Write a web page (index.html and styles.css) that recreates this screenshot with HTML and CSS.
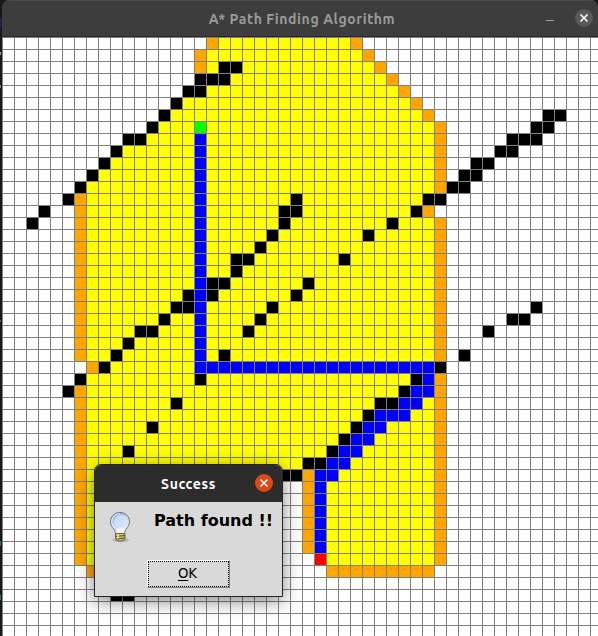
FILE: index.html
```html
<!DOCTYPE html>
<html lang="en">
<head>
<meta charset="utf-8">
<title>A* Path Finding Algorithm</title>
<link rel="stylesheet" href="styles.css">
</head>
<body>
<div class="window">
  <header class="titlebar">
    <h1 class="title">A* Path Finding Algorithm</h1>
    <div class="controls">
      <span class="minimize"></span>
      <span class="close"><svg viewBox="0 0 18 18"><path d="M5.500 5.500l7 7M12.500 5.500l-7 7"/></svg></span>
    </div>
  </header>
  <main class="board" id="board"></main>
</div>

<section class="dialog">
  <header class="dialog-title">
    <h2>Success</h2>
    <span class="dialog-close"><svg viewBox="0 0 18 18"><path d="M5.500 5.500l7 7M12.500 5.500l-7 7"/></svg></span>
  </header>
  <div class="dialog-body">
    <div class="message">
      <svg class="bulb" viewBox="0 0 32 32">
        <defs>
          <linearGradient id="glass" x1="0" y1="0" x2="0.6" y2="1">
            <stop offset="0" stop-color="#6f9fe0"/>
            <stop offset="0.5" stop-color="#bcd3f2"/>
            <stop offset="1" stop-color="#f4f4f0"/>
          </linearGradient>
          <radialGradient id="shade">
            <stop offset="0" stop-color="#000" stop-opacity="0.5"/>
            <stop offset="1" stop-color="#000" stop-opacity="0"/>
          </radialGradient>
        </defs>
        <ellipse cx="16.500" cy="29" rx="10" ry="2.600" fill="url(#shade)"/>
        <path d="M16 1.500C10.500 1.500 6.500 5.500 6.500 10.700c0 3.400 1.700 5.300 3.200 7.300 1.100 1.500 1.600 2.800 1.800 5.200h9c.2-2.400.7-3.700 1.800-5.200 1.500-2 3.200-3.900 3.200-7.300C25.500 5.500 21.500 1.500 16 1.500z" fill="url(#glass)" stroke="#6d7585" stroke-width="1"/>
        <path d="M16 2.700c-4.800 0-8.300 3.500-8.300 8 0 2.800 1.300 4.500 2.800 6.500" fill="none" stroke="#f5f9ff" stroke-width="1"/>
        <circle cx="16.500" cy="10.500" r="6.500" fill="#d5e3f7" opacity="0.75"/>
        <path d="M14 22v-4l1.500 1 1.500-1 1.500 1v3" fill="none" stroke="#fff" stroke-width="1.200"/>
        <path d="M11.500 22.500h9.500v5l-2.500 2.500h-4.500l-2.500-2.500z" fill="#c5c26d" stroke="#6b6a35" stroke-width="1"/>
        <path d="M11.500 25.500l9.500-1M12 28l9-1" stroke="#55542b" stroke-width="1"/>
        <path d="M14 23.500v4" stroke="#f3f1bd" stroke-width="1.500"/>
      </svg>
      <p>Path found !!</p>
    </div>
    <button class="ok"><span class="ok-focus"><span><u>O</u>K</span></span></button>
  </div>
</section>
<script src="board.js"></script>
</body>
</html>
```

FILE: styles.css
```css
* { box-sizing: border-box; }

body {
  margin: 0;
  width: 598px;
  height: 636px;
  overflow: hidden;
  /* sliver of the desktop behind the window's left edge */
  background:
    linear-gradient(#1c2350, #1c2350) 0 18px / 2px 9px no-repeat,
    linear-gradient(#9a9aa0, #9a9aa0) 0 52px / 1px 3px no-repeat,
    linear-gradient(#c86a30, #c86a30) 0 85px / 1px 3px no-repeat,
    linear-gradient(#a34a1c, #a34a1c) 0 320px / 1px 2px no-repeat,
    linear-gradient(#16806e, #16806e) 0 541px / 1px 5px no-repeat,
    linear-gradient(#16806e, #16806e) 0 595px / 1px 5px no-repeat,
    #17181a;
  font-family: "DejaVu Sans", sans-serif;
}

h1, h2, p { margin: 0; }

.window {
  margin-left: 2px;
  width: 596px;
  height: 636px;
  overflow: hidden;
  border-radius: 7px 7px 0 0;
}

.titlebar {
  display: grid;
  grid-template-columns: 60px 1fr 60px;
  align-items: center;
  height: 37px;
  background: #3d3d3d;
  border-top: 1px solid #4b4b4b;
  border-bottom: 1px solid #272727;
}

.title {
  grid-column: 2;
  padding-left: 4px;
  color: #9b9b99;
  font: bold 14px/20px Ubuntu, "Noto Sans", sans-serif;
  letter-spacing: 0.6px;
  text-align: center;
  white-space: nowrap;
}

.controls {
  display: flex;
  align-items: center;
  gap: 21px;
  margin-left: 8px;
}

.minimize {
  width: 8px;
  height: 1px;
  margin-top: 4px;
  background: #a0a0a0;
}

.close, .dialog-close {
  width: 18px;
  height: 18px;
  border-radius: 50%;
  background: #595959;
}

.close { margin-top: -2px; }

.close svg, .dialog-close svg {
  display: block;
  fill: none;
  stroke: #fff;
  stroke-width: 1.6;
}

.board {
  display: grid;
  grid-template-columns: repeat(50, 11px);
  grid-auto-rows: 11px;
  gap: 1px;
  width: 601px;
  padding: 1px;
  background: #808080;
}

.cell { background: #fff; }
.open { background: #ffa500; }
.closed { background: #ff0; }
.wall { background: #000; }
.route { background: #00f; }
.start { background: #0f0; }
.goal { background: #f00; }

.dialog {
  position: absolute;
  left: 94px;
  top: 464px;
  width: 189px;
  height: 133px;
  border: 1px solid #242424;
  border-radius: 7px 7px 0 0;
  background: #d9d9d9;
  box-shadow: 0 4px 18px rgba(0, 0, 0, 0.48);
  overflow: hidden;
}

.dialog-title {
  display: grid;
  grid-template-columns: 27px 1fr 27px;
  align-items: center;
  height: 37px;
  background: #2c2c2c;
}

.dialog-title h2 {
  grid-column: 2;
  color: #fff;
  font: bold 14px/20px Ubuntu, "Noto Sans", sans-serif;
  letter-spacing: 0.6px;
  text-align: center;
}

.dialog-close {
  margin-top: -2px;
  background: #de4817;
}

.dialog-body {
  display: flex;
  flex-direction: column;
  height: 94px;
}

.message {
  display: flex;
  align-items: flex-start;
  gap: 18px;
  height: 58px;
  padding: 9px 0 0 9px;
}

.bulb {
  flex: none;
  width: 32px;
  height: 32px;
}

.message p {
  color: #000;
  font-size: 16px;
  font-weight: bold;
  line-height: 19px;
  white-space: nowrap;
}

.ok {
  align-self: flex-start;
  width: 83px;
  height: 28px;
  margin-left: 52px;
  padding: 0;
  border: 1px solid;
  border-color: #fff #828282 #828282 #fff;
  background: #d9d9d9;
  color: #000;
  font: 13.3px/16px "DejaVu Sans", sans-serif;
}

.ok-focus {
  display: flex;
  align-items: center;
  justify-content: center;
  height: 100%;
  padding-right: 2px;
  border: 1px dotted #000;
}

.ok u { text-underline-offset: 2px; }
```

FILE: board.js
```js
// Each row lists runs of "<kind><first column>-<last column>"; later runs paint over earlier ones.
const kinds = { o: "open", y: "closed", b: "wall", p: "route", s: "start", g: "goal" };

const rows = [
  "o17 y18-28 o29",
  "o16 y17-29 o30",
  "o16 y17-30 b18-19 o31",
  "b16-18 y19-31 o32",
  "b15-16 y17-32 o33",
  "b14 y15-33 o34",
  "b13 y14-34 o35 b45-46",
  "b12 y13-35 s16 o36 b44-45",
  "b10-11 y12-35 p16 o36 b42-44",
  "b9 y10-35 p16 o36 b41-42",
  "b8 y9-35 p16 o36 b39-40",
  "b7 y8-35 p16 o36 b38-39",
  "b6 y7-35 p16 o36 b37-38",
  "b5 o6 y7-34 p16 b24 b35-36",
  "b3 o6 y7-33 p16 b23-24 b34 o35",
  "b2 o6 y7-35 p16 b23 b32 o36",
  "o6 y7-35 p16 b22 b30 o36",
  "o6 y7-35 p16 b21 o36",
  "o6 y7-35 p16 b19-20 b28 o36",
  "o6 y7-35 p16 b19 o36",
  "o6 y7-35 p16 b17-18 b25 o36",
  "o6 y7-35 b15 p16 b17 b24 o36",
  "o6 y7-35 b14-15 p16 b22 o36 b44",
  "o6 y7-35 b13 p16 b21 o36 b42-43",
  "o6 y7-35 b11-12 p16 b20 o36 b40",
  "o6 y7-35 b10 p16 o36",
  "o6 y7-35 b9 p16 b18 o36 b38",
  "o7 b8 y9-15 p16-35 b36",
  "b6 y7-33 b16 b34 p35 o36",
  "b5 o6 y7-32 b33 p34-35 o36",
  "o6 y7-35 b14 b31-32 p33-34 o36",
  "o6 y7-35 b30 p31-33 o36",
  "o6 y7-35 b12 b29 p30-31 o36",
  "o6 y7-35 b28 p29-30 o36",
  "o6 y7-35 b10 b27 p28-29 o36",
  "o6 y7-24 b25-26 p27-28 y29-35 o36",
  "o6 y7-22 b23-24 o25 p26-27 y28-35 o36",
  "o6 y7-9 o25 p26 y27-35 o36",
  "o6 y7-9 o25 p26 y27-35 o36",
  "o6 y7-9 o25 p26 y27-35 o36",
  "o6 y7-9 o25 p26 y27-35 o36",
  "o6 y7-9 o25 p26 y27-35 o36",
  "o6 y7-9 o25 p26 y27-35 o36",
  "o6 y7-9 g26 y27-35 o36",
  "o7-9 o27-35",
  "",
  "b9-10",
  "", "", ""
];

const board = document.getElementById("board");
for (const row of rows) {
  const cells = Array(50).fill("");
  for (const run of row.split(" ").filter(Boolean)) {
    const [first, last = first] = run.slice(1).split("-").map(Number);
    cells.fill(kinds[run[0]], first, last + 1);
  }
  for (const kind of cells) {
    const cell = document.createElement("div");
    cell.className = "cell " + kind;
    board.append(cell);
  }
}
```
